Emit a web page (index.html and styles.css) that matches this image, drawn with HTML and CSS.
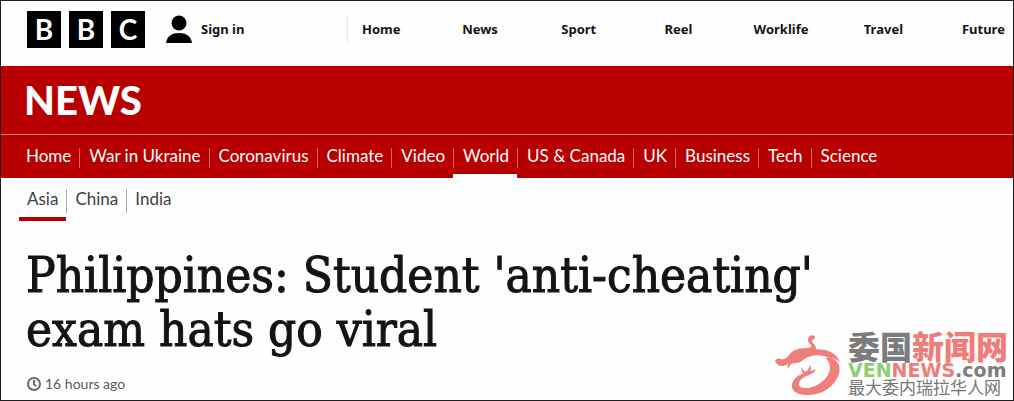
FILE: index.html
```html
<!DOCTYPE html>
<html lang="en">
<head>
    <meta charset="UTF-8">
    <meta name="viewport" content="width=device-width, initial-scale=1.0">
    <title>Philippines: Student 'anti-cheating' exam hats go viral - BBC News</title>
    <link rel="stylesheet" href="styles.css">
</head>
<body>
    <header class="top-bar">
        <a href="#" class="logo" aria-label="BBC">
            <span>B</span>
            <span>B</span>
            <span>C</span>
        </a>
        <a href="#" class="sign-in">
            <svg width="26" height="28" viewBox="0 0 26 28" aria-hidden="true">
                <circle cx="13" cy="8" r="7.500"/>
                <path d="M0 28C1 21 6 18 13 18s12 3 13 10z"/>
            </svg>
            Sign in
        </a>
        <nav class="main-nav">
            <a href="#">Home</a>
            <a href="#">News</a>
            <a href="#">Sport</a>
            <a href="#">Reel</a>
            <a href="#">Worklife</a>
            <a href="#">Travel</a>
            <a href="#">Future</a>
        </nav>
    </header>

    <div class="news-banner">
        <a href="#" class="news-title">NEWS</a>
        <nav class="section-nav">
            <a href="#">Home</a>
            <a href="#">War in Ukraine</a>
            <a href="#">Coronavirus</a>
            <a href="#">Climate</a>
            <a href="#">Video</a>
            <a href="#" class="active">World</a>
            <a href="#">US &amp; Canada</a>
            <a href="#">UK</a>
            <a href="#">Business</a>
            <a href="#">Tech</a>
            <a href="#">Science</a>
        </nav>
    </div>

    <nav class="sub-nav">
        <a href="#" class="active">Asia</a>
        <a href="#">China</a>
        <a href="#">India</a>
    </nav>

    <main class="article">
        <h1>Philippines: Student 'anti-cheating' exam hats go viral</h1>
        <p class="posted">
            <svg width="14" height="14" viewBox="0 0 14 14" aria-hidden="true">
                <circle cx="7" cy="7" r="6"/>
                <path d="M7 3v4.500l2.500 1.500"/>
            </svg>
            <time>16 hours ago</time>
        </p>
    </main>

    <!-- Watermark -->
    <div class="watermark">
        <svg width="68" height="60" viewBox="0 37 204 180" aria-hidden="true">
            <path d="M0 116c2-8 10-10 17-7 14 3 20-5 30-17 8-10 20-14 36-15 14-1 25-1 26-6 0-6-10-9-10-18 0-10 6-15 14-15 6 0 9 6 6 10-3 3-8 3-8 8 0 7 12 9 12 24 30-1 58 7 72 38-10-8-20-12-32-12-24-12-56-10-76 4-8 8-18 12-30 12-10 1-14 7-17 15-5-6-3-12 2-17-14 14-34 14-42-4z"/>
            <path d="M152 106c18-3 38 8 41 25 5 26-14 56-44 73-30 17-76 18-92 1-14-15-4-43 27-52-4-6-6-12-5-20 3 7 6 11 12 14 8-4 12-9 13-21 5 7 5 12 2 18 6 0 11-2 16-6-2 14-16 16-28 22-18 9-27 22-21 30 8 11 38 7 60-7 32-20 43-55 19-77z"/>
        </svg>
        <div class="watermark-text">
            <div class="wm-name"><span>委国</span>新闻网</div>
            <div class="wm-site"><span class="ven">VEN</span>NEWS<span class="com">.com</span></div>
            <div class="wm-slogan">最大委内瑞拉华人网</div>
        </div>
    </div>
</body>
</html>
```

FILE: styles.css
```css
* {
    box-sizing: border-box;
}
body {
    margin: 0;
    min-height: 100vh;
    position: relative;
    border: 1px solid #231f20;
    background-color: #fefefe;
    color: #141414;
    font-family: Lato, "Noto Sans CJK SC", sans-serif;
}
a {
    color: inherit;
    text-decoration: none;
}

/* Top bar */
.top-bar {
    display: flex;
    align-items: center;
    height: 65px;
    padding: 0 8px 9px 26px;
    font-family: "Noto Sans", sans-serif;
    font-size: 13px;
    font-weight: bold;
}
.logo {
    display: flex;
    gap: 8px;
}
.logo span {
    width: 34px;
    height: 37px;
    background-color: #000;
    color: #fff;
    font-family: Lato, sans-serif;
    font-size: 28px;
    line-height: 36px;
    text-align: center;
}
.sign-in {
    display: flex;
    align-items: center;
    gap: 9px;
    width: 181px;
    margin-left: 21px;
}
.main-nav {
    flex: 1;
    display: grid;
    grid-template-columns: 100fr 99fr 103fr 89fr 110fr 98fr 43fr;
    padding-left: 14px;
    border-left: 1px solid #e6e6e6;
    line-height: 27px;
}

/* Red banner */
.news-banner {
    background-color: #b80000;
    color: #fff;
}
.news-title {
    display: block;
    height: 68px;
    padding-left: 23px;
    font-size: 40px;
    font-weight: 900;
    line-height: 68px;
}
.section-nav {
    display: flex;
    height: 44px;
    padding-left: 17px;
    border-top: 1px solid #e08080;
    font-size: 17px;
    line-height: 20px;
}
.section-nav a {
    padding-top: 11px;
    border-bottom: 4px solid transparent;
}
.section-nav a::before,
.section-nav a::after {
    content: "";
    display: inline-block;
    width: 8px;
    height: 20px;
    vertical-align: middle;
}
.section-nav a + a::before {
    width: 9px;
    border-left: 1px solid #d46666;
}
.section-nav .active {
    border-bottom-color: #fefefe;
}

/* Asia / China / India */
.sub-nav {
    display: flex;
    padding: 9px 0 0 18px;
    color: #404040;
    font-size: 17px;
    line-height: 24px;
}
.sub-nav a {
    padding-bottom: 4px;
}
.sub-nav a::before,
.sub-nav a::after {
    content: "";
    display: inline-block;
    width: 8px;
    height: 24px;
    vertical-align: middle;
}
.sub-nav a + a::before {
    border-left: 1px solid #aaa;
}
.sub-nav .active {
    border-bottom: 4px solid #b80000;
}

/* Article */
.article {
    padding: 28px 24px 0 25px;
}
h1 {
    max-width: 860px;
    margin: 0;
    font-family: "DejaVu Serif Condensed", "DejaVu Serif", serif;
    font-size: 49px;
    font-weight: normal;
    line-height: 54px;
    -webkit-text-stroke: 1px #141414;
}
.posted {
    display: flex;
    align-items: center;
    gap: 4px;
    margin: 17px 0 0 1px;
    color: #5a5a5a;
    font-size: 14px;
    line-height: 20px;
}
.posted svg {
    fill: none;
    stroke: #6a6a6a;
    stroke-width: 2;
}

/* Watermark */
.watermark {
    position: absolute;
    right: 5px;
    bottom: 4px;
    display: flex;
    align-items: center;
    gap: 5px;
    color: #f07c78;
}
.watermark svg {
    fill: #ee7f7b;
}
.watermark-text {
    white-space: nowrap;
}
.wm-name {
    font-size: 32px;
    font-weight: 900;
    line-height: 28px;
}
.wm-name span,
.wm-site .com {
    color: #7c7c7c;
}
.wm-site {
    font-family: "DejaVu Sans", sans-serif;
    font-size: 19px;
    font-weight: bold;
    line-height: 18px;
}
.wm-site .ven {
    color: #8fcf74;
}
.wm-slogan {
    color: #777;
    font-size: 17px;
    line-height: 17px;
}
```
